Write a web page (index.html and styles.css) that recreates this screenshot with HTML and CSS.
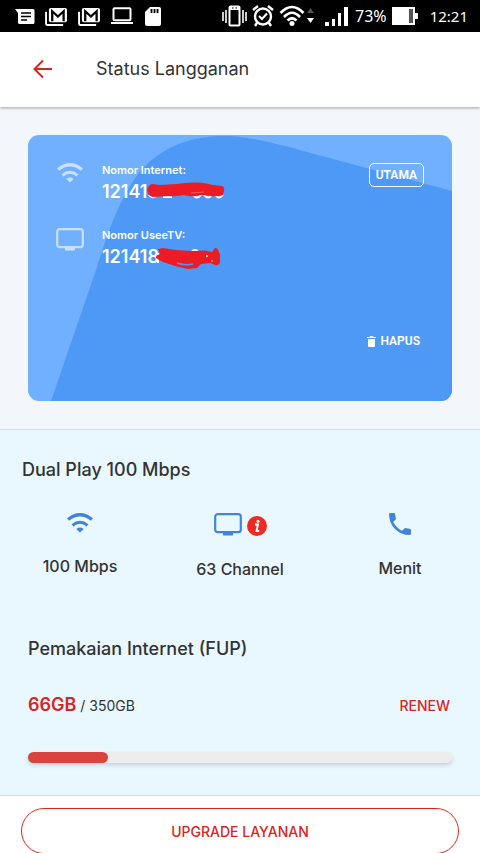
FILE: index.html
```html
<!DOCTYPE html>
<html lang="id">
<head>
<meta charset="utf-8">
<meta name="viewport" content="width=device-width, initial-scale=1">
<title>Status Langganan</title>
<link rel="stylesheet" href="styles.css">
</head>
<body>
<svg class="defs" aria-hidden="true">
  <symbol id="wifi" viewBox="0 0 28 20">
    <path d="M2 6.5Q14-3 26 6.5" fill="none" stroke="currentColor" stroke-width="3.2"/>
    <path d="M6.5 12.3Q14 6.3 21.500 12.300" fill="none" stroke="currentColor" stroke-width="3"/>
    <path d="M10.300 16Q14 13.200 17.700 16L14 19.600Z" fill="currentColor"/>
  </symbol>
  <symbol id="tv" viewBox="0 0 28 23">
    <rect x="1.200" y="1.200" width="25.600" height="18" rx="2.500" fill="none" stroke="currentColor" stroke-width="2.200"/>
    <path d="M9 19h10v3.500H9z" fill="currentColor"/>
  </symbol>
  <symbol id="gmail" viewBox="0 0 24 20">
    <path d="M1 5v12.500Q1 19 2.500 19H19" fill="none" stroke="currentColor" stroke-width="2"/>
    <rect x="4" y="1" width="19" height="15" rx="2" fill="currentColor"/>
    <path d="M7.500 15V4.500L13.500 10l6-5.500V15" fill="none" stroke="#000" stroke-width="2.400"/>
  </symbol>
</svg>
<div class="app">
  <div class="statusbar">
    <div class="notices">
      <svg width="20" height="17" viewBox="0 0 20 17"><path d="M0 1h18q1.500 0 1.500 1.500v12q0 1.500-1.500 1.500H4.500Q3 16 3 14.500V5z" fill="#fff"/><path d="M6 5h10M6 8.500h10M6 12h6" stroke="#000" stroke-width="1.600"/></svg>
      <svg width="23" height="19"><use href="#gmail"/></svg>
      <svg width="23" height="19"><use href="#gmail"/></svg>
      <svg width="22" height="18" viewBox="0 0 22 18"><rect x="2.500" y="1.200" width="17" height="12" rx="1" fill="none" stroke="#fff" stroke-width="2"/><path d="M0 15h22v2H0z" fill="#fff"/></svg>
      <svg class="sd" width="16" height="19" viewBox="0 0 16 19"><path d="M5 0h9q2 0 2 2v15q0 2-2 2H2q-2 0-2-2V5z" fill="#fff"/><path d="M6.500 2v4M9.500 2v4M12.500 2v4" stroke="#000" stroke-width="1.800"/></svg>
    </div>
    <div class="system">
      <svg width="25" height="22" viewBox="0 0 25 22"><path d="M1 7v9M4 5v13M21 5v13M24 7v9" stroke="#fff" stroke-width="1.600"/><rect x="7.500" y="1.500" width="10" height="19" rx="1" fill="none" stroke="#fff" stroke-width="2"/><path d="M7 2h11v3H7z" fill="#fff"/><path d="M10 3h1.500M13.500 3H15" stroke="#000"/></svg>
      <svg width="22" height="22" viewBox="0 0 22 22" fill="none" stroke="#fff"><circle cx="11" cy="11.500" r="8" stroke-width="2.400"/><path d="M7 11l3 3 5-5.500" stroke-width="2.200"/><path d="M1 5l5-4M21 5l-5-4M5.500 17L3 21M16.500 17l2.500 4" stroke-width="2.400"/></svg>
      <svg class="net" width="36" height="22" viewBox="0 0 36 22"><g fill="none" stroke="#fff" stroke-width="2.600"><path d="M1.500 8Q13-4 24.500 8"/><path d="M5 12Q13 3.500 21 12"/><path d="M8.500 15.500Q13 11 17.500 15.500"/></g><circle cx="13" cy="18.500" r="2.500" fill="#fff"/><path d="M28 8l3.500-5L35 8z" fill="#555"/><path d="M28 13h7l-3.500 5z" fill="#fff"/></svg>
      <svg width="23" height="20" viewBox="0 0 23 20"><path d="M0 16h4v4H0zM7 13h3v7H7zM13 7h3v13h-3zM19 1h4v19h-4z" fill="#fff"/></svg>
      <span class="percent">73%</span>
      <svg width="26" height="18" viewBox="0 0 26 18"><path d="M0 0h23v6h3v6h-3v6H0z" fill="#fff"/><path d="M17 2h4v14h-4z" fill="#555"/></svg>
      <span class="clock">12:21</span>
    </div>
  </div>

  <header class="topbar">
    <button class="back" aria-label="Kembali"><svg width="20" height="20" viewBox="0 0 20 20"><path d="M19 10H2M10 1.500L1.500 10l8.500 8.500" fill="none" stroke="currentColor" stroke-width="2"/></svg></button>
    <h1>Status Langganan</h1>
  </header>

  <section class="account">
    <div class="card">
      <svg class="card-bg" viewBox="0 0 424 266" preserveAspectRatio="none"><path d="M23 266L68 135C80 97 92 60 115 33C142 5 176 0 202 1C222 2 250 9 279 17L424 56V266Z" fill="#4e99f6"/></svg>
      <div class="line">
        <svg class="line-icon" width="28" height="20"><use href="#wifi"/></svg>
        <div class="number">
          <span class="caption">Nomor Internet:</span>
          <strong>12141</strong>
          <svg class="redaction first" width="79" height="18" viewBox="0 0 79 18"><path d="M2 13q3 4 7 1M16 15h9M46 13q4 5 8 0M57 13q4 5 8 0M68 13q4 5 8 0" fill="none" stroke="#fff" stroke-width="2"/><path d="M0 8Q1 3 5 2l8 1 17-1Q40 0 52 .5 60 1 66 3l9 1q3 1 2 5l-1 4q-5 2-13 1-8-2-14 0-6 1-12-1-9 2-16 1L6 15Q1 14 0 8z" fill="#ed1c24"/><path d="M44 11l13-1" stroke="#f4575d"/></svg>
        </div>
        <span class="badge">UTAMA</span>
      </div>
      <div class="line">
        <svg class="line-icon" width="28" height="23"><use href="#tv"/></svg>
        <div class="number">
          <span class="caption">Nomor UseeTV:</span>
          <strong>121418</strong>
          <svg class="redaction second" width="68" height="23" viewBox="0 0 68 23"><path d="M4 6v2M4 13v3M15 15q3 3 7 0M38 4q3-2 6 0" fill="none" stroke="#fff" stroke-width="2"/><path d="M4 2l5-1 12 2 17 1 13-.5 7 1.500 3-4q3-1 5 7v7q-1 4-5 3l-5-2-9 1-4 4-9 1-13-3-12-4-7-4q-1-2 4-4z" fill="#ed1c24"/><path d="M23 16q9 3 16 1" fill="none" stroke="#4e99f6" stroke-width="1.500"/><circle cx="53" cy="9" r="1" fill="#fff"/><circle cx="58" cy="14" r=".7" fill="#fff"/></svg>
        </div>
      </div>
      <button class="delete"><svg width="9" height="11" viewBox="0 0 9 11"><path d="M0 1h2.500l1-1h2l1 1H9v1H0zM1 3h7v7q0 1-1 1H2q-1 0-1-1z" fill="currentColor"/></svg>HAPUS</button>
    </div>
  </section>

  <section class="plan">
    <h2 class="plan-name">Dual Play 100 Mbps</h2>
    <ul class="features">
      <li><svg class="blue" width="28" height="20"><use href="#wifi"/></svg><span>100 Mbps</span></li>
      <li>
        <div class="with-info">
          <svg class="blue" width="28" height="23"><use href="#tv"/></svg>
          <button class="info" aria-label="Info channel"><svg width="20" height="20" viewBox="0 0 20 20"><circle cx="10" cy="10" r="10" fill="#ed2a24"/><circle cx="11" cy="5.200" r="1.500" fill="#fff"/><path d="M8 8.500h3L9.500 15h2.700" fill="none" stroke="#fff" stroke-width="1.900"/></svg></button>
        </div>
        <span>63 Channel</span>
      </li>
      <li><svg class="blue" width="22" height="22" viewBox="0 0 22 22"><path d="M1.200 0H5q1.200 0 1.200 1.200 0 2.200.7 4.200.2.700-.3 1.200L4.200 9Q7.500 15 13 17.800l2.400-2.400q.5-.5 1.200-.3 2 .7 4.200.7 1.200 0 1.200 1.200v3.800Q22 22 20.800 22 12 22 6 16T0 1.200Q0 0 1.200 0z" fill="currentColor"/></svg><span>Menit</span></li>
    </ul>
    <div class="usage">
      <h2>Pemakaian Internet (FUP)</h2>
      <div class="quota">
        <p><strong>66GB</strong> / 350GB</p>
        <button class="renew">RENEW</button>
      </div>
      <div class="meter" role="progressbar" aria-label="Pemakaian Internet" aria-valuenow="66" aria-valuemin="0" aria-valuemax="350"><div style="width:18.860%"></div></div>
    </div>
  </section>

  <footer><button class="upgrade">UPGRADE LAYANAN</button></footer>
</div>
</body>
</html>
```

FILE: styles.css
```css
* { box-sizing: border-box; }
body { margin: 0; font-family: Inter, Roboto, sans-serif; color: #333; background: #fff; }
h1, h2, p, ul { margin: 0; padding: 0; }
button { font: inherit; color: inherit; background: none; border: 0; padding: 0; cursor: pointer; }
svg { display: block; flex: none; }
.defs { position: absolute; width: 0; height: 0; }
.app { height: 100vh; overflow: hidden; display: flex; flex-direction: column; }
.app > * { flex: none; }

.statusbar { height: 32px; padding: 0 12px 0 15px; display: flex; align-items: center; justify-content: space-between; background: #000; color: #fff; font-family: "Noto Sans", sans-serif; font-size: 16px; line-height: 24px; }
.notices, .system { display: flex; align-items: center; }
.notices { gap: 10px; }
.sd { margin-left: 2px; }
.system { gap: 5px; }
.net { margin-right: 5px; }
.percent { margin-left: 2px; }
.clock { margin-left: 7px; font-size: 15px; }

.topbar { height: 75px; padding: 0 32px 2px; display: flex; align-items: center; gap: 43px; background: #fff; box-shadow: 0 1px 3px rgba(0, 0, 0, .35); position: relative; }
.back { color: #dc241f; padding-left: 1px; }
h1 { font-size: 18px; line-height: 24px; font-weight: 400; }

.account { background: #f3f7fb; padding: 28px 28px 28px; border-bottom: 1px solid #d8dde0; }
.card { position: relative; min-height: 266px; padding: 28px 28px 52px; border-radius: 11px; overflow: hidden; background: #70b0ff; color: #fff; display: flex; flex-direction: column; }
.card-bg { position: absolute; inset: 0; width: 100%; height: 100%; }
.line { position: relative; display: flex; align-items: flex-start; height: 65px; }
.line-icon { color: #c9e1ff; margin-right: 18px; }
.number { position: relative; display: flex; flex-direction: column; }
.caption { font-size: 11px; line-height: 14px; font-weight: 600; }
.number strong { font-size: 18px; line-height: 30px; font-weight: 600; }
.redaction { position: absolute; top: 19px; }
.first { left: 45px; }
.second { left: 52px; }
.badge, .delete { font-family: Roboto, sans-serif; font-size: 12px; font-weight: 600; }
.badge { margin-left: auto; border: 1px solid #fff; border-radius: 5px; padding: 0 6px; line-height: 22px; }
.delete { position: relative; margin-top: auto; align-self: flex-end; margin-right: 4px; display: flex; align-items: center; gap: 4px; line-height: 16px; }

.plan { background: #e9f7ff; padding: 28px 0 32px; border-bottom: 1px solid #d8dde0; }
h2 { font-size: 18px; line-height: 24px; font-weight: 500; }
.plan-name { padding: 0 22px; }
.features { list-style: none; display: grid; grid-template-columns: repeat(3, 1fr); padding-top: 31px; }
.features li { display: flex; flex-direction: column; align-items: center; gap: 22px; font-size: 16px; line-height: 22px; font-weight: 500; }
.blue { color: #4285d6; }
.with-info { display: flex; gap: 5px; align-items: flex-start; }
.info { padding-top: 3px; }
.usage { padding: 57px 28px 0; }
.quota { display: flex; justify-content: space-between; align-items: center; padding-top: 32px; }
.quota p { font-size: 14px; line-height: 24px; }
.quota strong { font-size: 18px; font-weight: 600; color: #dc241f; }
.renew { color: #dc241f; font-size: 14px; line-height: 20px; font-weight: 500; margin-right: 2px; }
.meter { height: 11px; margin-top: 34px; border-radius: 6px; background: #ededed; box-shadow: 0 2px 4px rgba(0, 0, 0, .16); }
.meter div { height: 11px; border-radius: 6px; background: #da433f; }

footer { padding: 12px 21px; background: #fff; }
.upgrade { width: 100%; height: 46px; border: 1px solid #dc241f; border-radius: 23px; color: #dc241f; font-size: 14px; font-weight: 500; background: #fff; }
```
